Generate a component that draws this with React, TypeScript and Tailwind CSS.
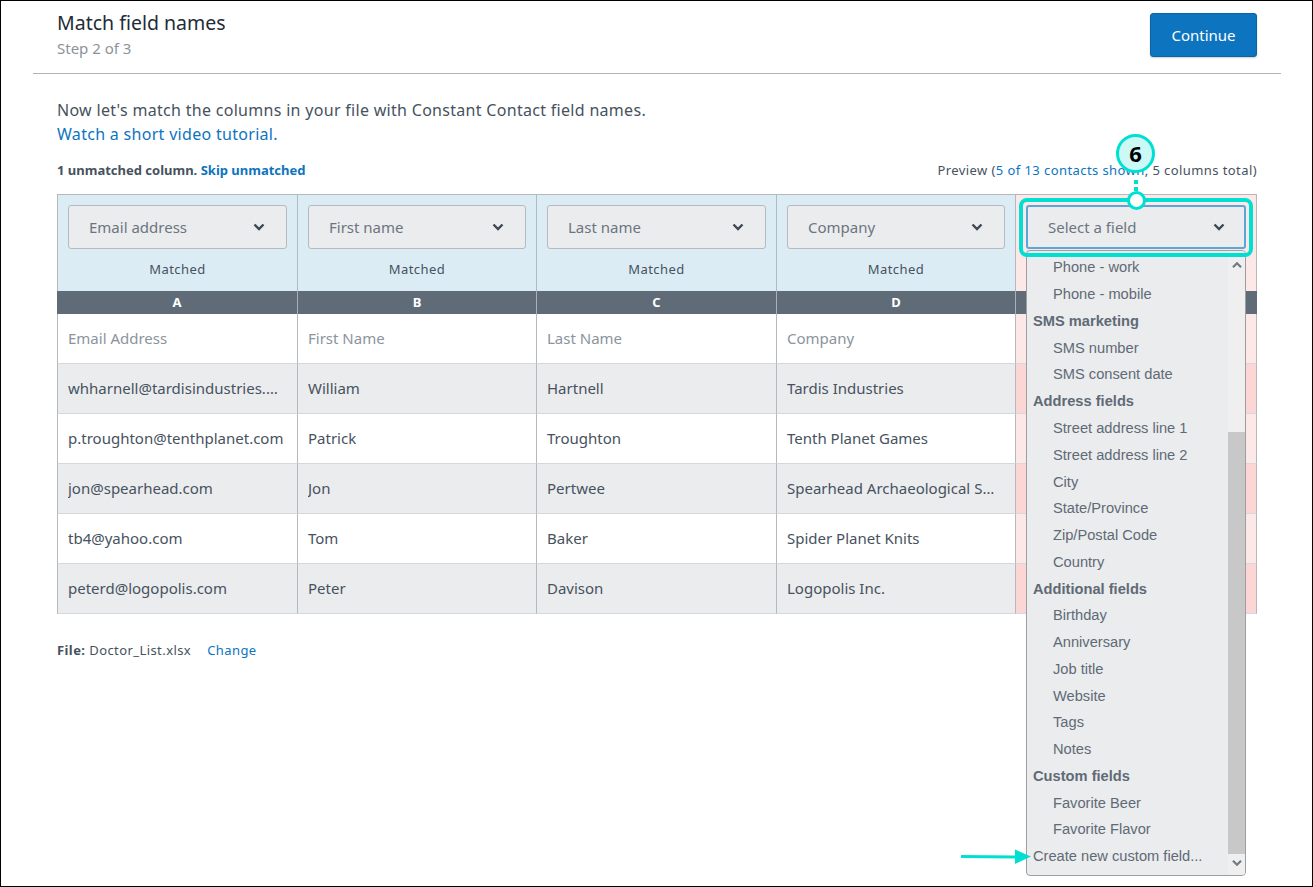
import React from "react";

const SANS = "font-['Noto_Sans',sans-serif]";

function Chevron({ className = "" }: { className?: string }) {
  return (
    <svg viewBox="0 0 12 8" className={`w-[12px] h-[8px] ${className}`} fill="none">
      <path d="M1.5 1.5 L6 6 L10.5 1.5" stroke="#3d4853" strokeWidth="2.4" />
    </svg>
  );
}

function Select({ label, focus = false }: { label: string; focus?: boolean }) {
  return (
    <div
      className={`h-[44px] flex items-center justify-between bg-[#ebecee] rounded-[3px] pl-[20px] text-[15px] text-[#6b7580] ${
        focus ? "pr-[19px] border-2 border-[#5ba6d6]" : "pr-[21px] border border-[#b6babe]"
      }`}
    >
      <span>{label}</span>
      <Chevron />
    </div>
  );
}

const cols = "grid grid-cols-[240px_239px_240px_239px_242px]";
const letters = ["A", "B", "C", "D", "E"];
const names = ["Email Address", "First Name", "Last Name", "Company"];
const heads = ["Email address", "First name", "Last name", "Company"];
const rows = [
  ["whharnell@tardisindustries.com", "William", "Hartnell", "Tardis Industries"],
  ["p.troughton@tenthplanet.com", "Patrick", "Troughton", "Tenth Planet Games"],
  ["jon@spearhead.com", "Jon", "Pertwee", "Spearhead Archaeological Supplies"],
  ["tb4@yahoo.com", "Tom", "Baker", "Spider Planet Knits"],
  ["peterd@logopolis.com", "Peter", "Davison", "Logopolis Inc."],
];

const options: [string, number][] = [
  ["Phone - work", 1],
  ["Phone - mobile", 1],
  ["SMS marketing", 0],
  ["SMS number", 1],
  ["SMS consent date", 1],
  ["Address fields", 0],
  ["Street address line 1", 1],
  ["Street address line 2", 1],
  ["City", 1],
  ["State/Province", 1],
  ["Zip/Postal Code", 1],
  ["Country", 1],
  ["Additional fields", 0],
  ["Birthday", 1],
  ["Anniversary", 1],
  ["Job title", 1],
  ["Website", 1],
  ["Tags", 1],
  ["Notes", 1],
  ["Custom fields", 0],
  ["Favorite Beer", 1],
  ["Favorite Flavor", 1],
  ["Create new custom field...", 2],
];

export default function App() {
  return (
    <div className={`relative w-[1313px] h-[887px] overflow-hidden bg-white border border-black text-[#46525e] ${SANS}`}>
      <div className="ml-[32px] mr-[31px] h-[73px] border-b border-[#b0b2b5] pl-[24px] pr-[24px] flex justify-between items-start">
        <div className="pt-[8px]">
          <div className="text-[19.5px] leading-[27px] text-[#1f2b36]">Match field names</div>
          <div className="text-[15px] leading-[22px] mt-[1px] text-[#8b939b]">Step 2 of 3</div>
        </div>
        <div className="mt-[12px] w-[107px] h-[44px] rounded-[3px] bg-[#0d74bf] border border-[#0b64a6] shadow-[0_1px_2px_rgba(0,0,0,0.2)] text-white text-[15px] flex items-center justify-center">
          Continue
        </div>
      </div>

      <div className="pl-[56px] pr-[55px] pt-[24px]">
        <div className="text-[16px] leading-[24px] tracking-[0.3px]">
          Now let's match the columns in your file with Constant Contact field names.
        </div>
        <div className="text-[16px] leading-[24px] tracking-[0.3px] text-[#0d74bf]">Watch a short video tutorial.</div>

        <div className="mt-[14px] flex justify-between text-[13px] leading-[20px]">
          <div className="font-bold">
            1 unmatched column. <span className="text-[#0d74bf]">Skip unmatched</span>
          </div>
          <div className="tracking-[0.42px]">
            Preview (<span className="text-[#0d74bf]">5 of 13 contacts shown</span>, 5 columns total)
          </div>
        </div>

        <div className="mt-[14px] w-[1200px] border-t border-[#b5b9bd]">
          <div className={cols}>
            {heads.map((h) => (
              <div key={h} className="h-[96px] bg-[#dcecf5] border-l border-[#b5b9bd] px-[10px] pt-[10px]">
                <Select label={h} />
                <div className="text-center text-[13px] tracking-[0.42px] leading-[20px] mt-[10px]">Matched</div>
              </div>
            ))}
            <div className="h-[96px] bg-[#fde8e8] border-x border-[#b5b9bd] px-[10px] pt-[10px]">
              <Select label="Select a field" focus />
            </div>
          </div>

          <div className={cols}>
            {letters.map((l, i) => (
              <div
                key={l}
                className={`h-[23px] bg-[#5f6b76] text-white text-[13px] font-bold flex items-center justify-center ${
                  i === 0 ? "" : "border-l border-[#a9afb5]"
                }`}
              >
                {l}
              </div>
            ))}
          </div>

          <div className={cols}>
            {names.map((n) => (
              <div
                key={n}
                className="h-[50px] border-l border-b border-l-[#b5b9bd] border-b-[#d5d7da] pl-[10px] flex items-center text-[15px] text-[#8b949d]"
              >
                {n}
              </div>
            ))}
            <div className="h-[50px] bg-[#fde8e8] border-x border-b border-x-[#b5b9bd] border-b-[#d5d7da]" />
          </div>

          {rows.map((r, ri) => (
            <div key={ri} className={cols}>
              {r.map((c) => (
                <div
                  key={c}
                  className={`h-[50px] min-w-0 border-l border-b border-l-[#b5b9bd] border-b-[#d5d7da] pl-[10px] pr-[13px] flex items-center text-[15px] ${
                    ri % 2 === 0 ? "bg-[#ebecee]" : "bg-white"
                  }`}
                >
                  <span className="truncate">{c}</span>
                </div>
              ))}
              <div
                className={`h-[50px] border-x border-b border-x-[#b5b9bd] border-b-[#d5d7da] ${
                  ri % 2 === 0 ? "bg-[#fcd5d5]" : "bg-[#fde8e8]"
                }`}
              />
            </div>
          ))}
        </div>

        <div className="mt-[26px] text-[13px] tracking-[0.42px] leading-[20px] flex">
          <span>
            <b>File:</b> Doctor_List.xlsx
          </span>
          <span className="ml-[16px] text-[#0d74bf]">Change</span>
        </div>
      </div>

      {/* open dropdown list */}
      <div className="absolute left-[1025px] top-[249px] w-[220px] h-[626px] bg-[#ebecee] border border-[#9c9ea1] rounded-[4px] overflow-hidden font-['Liberation_Sans',sans-serif] text-[14.67px] text-[#606a75]">
        <div className="pt-[3px] pr-[18px]">
          {options.map(([t, k]) => (
            <div
              key={t}
              className={`h-[26.77px] flex items-center whitespace-nowrap ${
                k === 1 ? "pl-[26px]" : "pl-[6px]"
              } ${k === 0 ? "font-bold" : ""}`}
            >
              {t}
            </div>
          ))}
        </div>
        <div className="absolute right-0 top-0 bottom-0 w-[17px] bg-[#efefef] flex flex-col">
          <div className="h-[28px] flex items-center justify-center">
            <Chevron className="rotate-180 scale-90 opacity-70" />
          </div>
          <div className="h-[153px]" />
          <div className="flex-1 bg-[#c8c8c8]" />
          <div className="h-[21px] pb-[4px] flex items-center justify-center">
            <Chevron className="scale-90 opacity-70" />
          </div>
        </div>
      </div>

      {/* annotation */}
      <div className="absolute left-[1018px] top-[197px] w-[234px] h-[59px] border-[4px] border-[#00e0d2] rounded-[8px]" />
      <div className="absolute left-[1133px] top-[179px] w-[4px] h-[4px] bg-[#00e0d2]" />
      <div className="absolute left-[1133px] top-[186px] w-[4px] h-[4px] bg-[#00e0d2]" />
      <div className="absolute left-[1126px] top-[190px] w-[19px] h-[19px] rounded-full bg-white border-[3px] border-[#00e0d2]" />
      <div className="absolute left-[1115px] top-[133px] w-[39px] h-[39px] rounded-full bg-[#ccf9f5] border-[3px] border-[#00e0d2] flex items-center justify-center text-[22px] font-bold text-black">
        6
      </div>
      <svg className="absolute left-[960px] top-[848px] w-[70px] h-[16px]" viewBox="0 0 70 16">
        <path d="M0 6 L54 6.5 V0.5 L70 7.5 L54 15 V9.5 L0 9 Z" fill="#00e0d2" />
      </svg>
    </div>
  );
}
